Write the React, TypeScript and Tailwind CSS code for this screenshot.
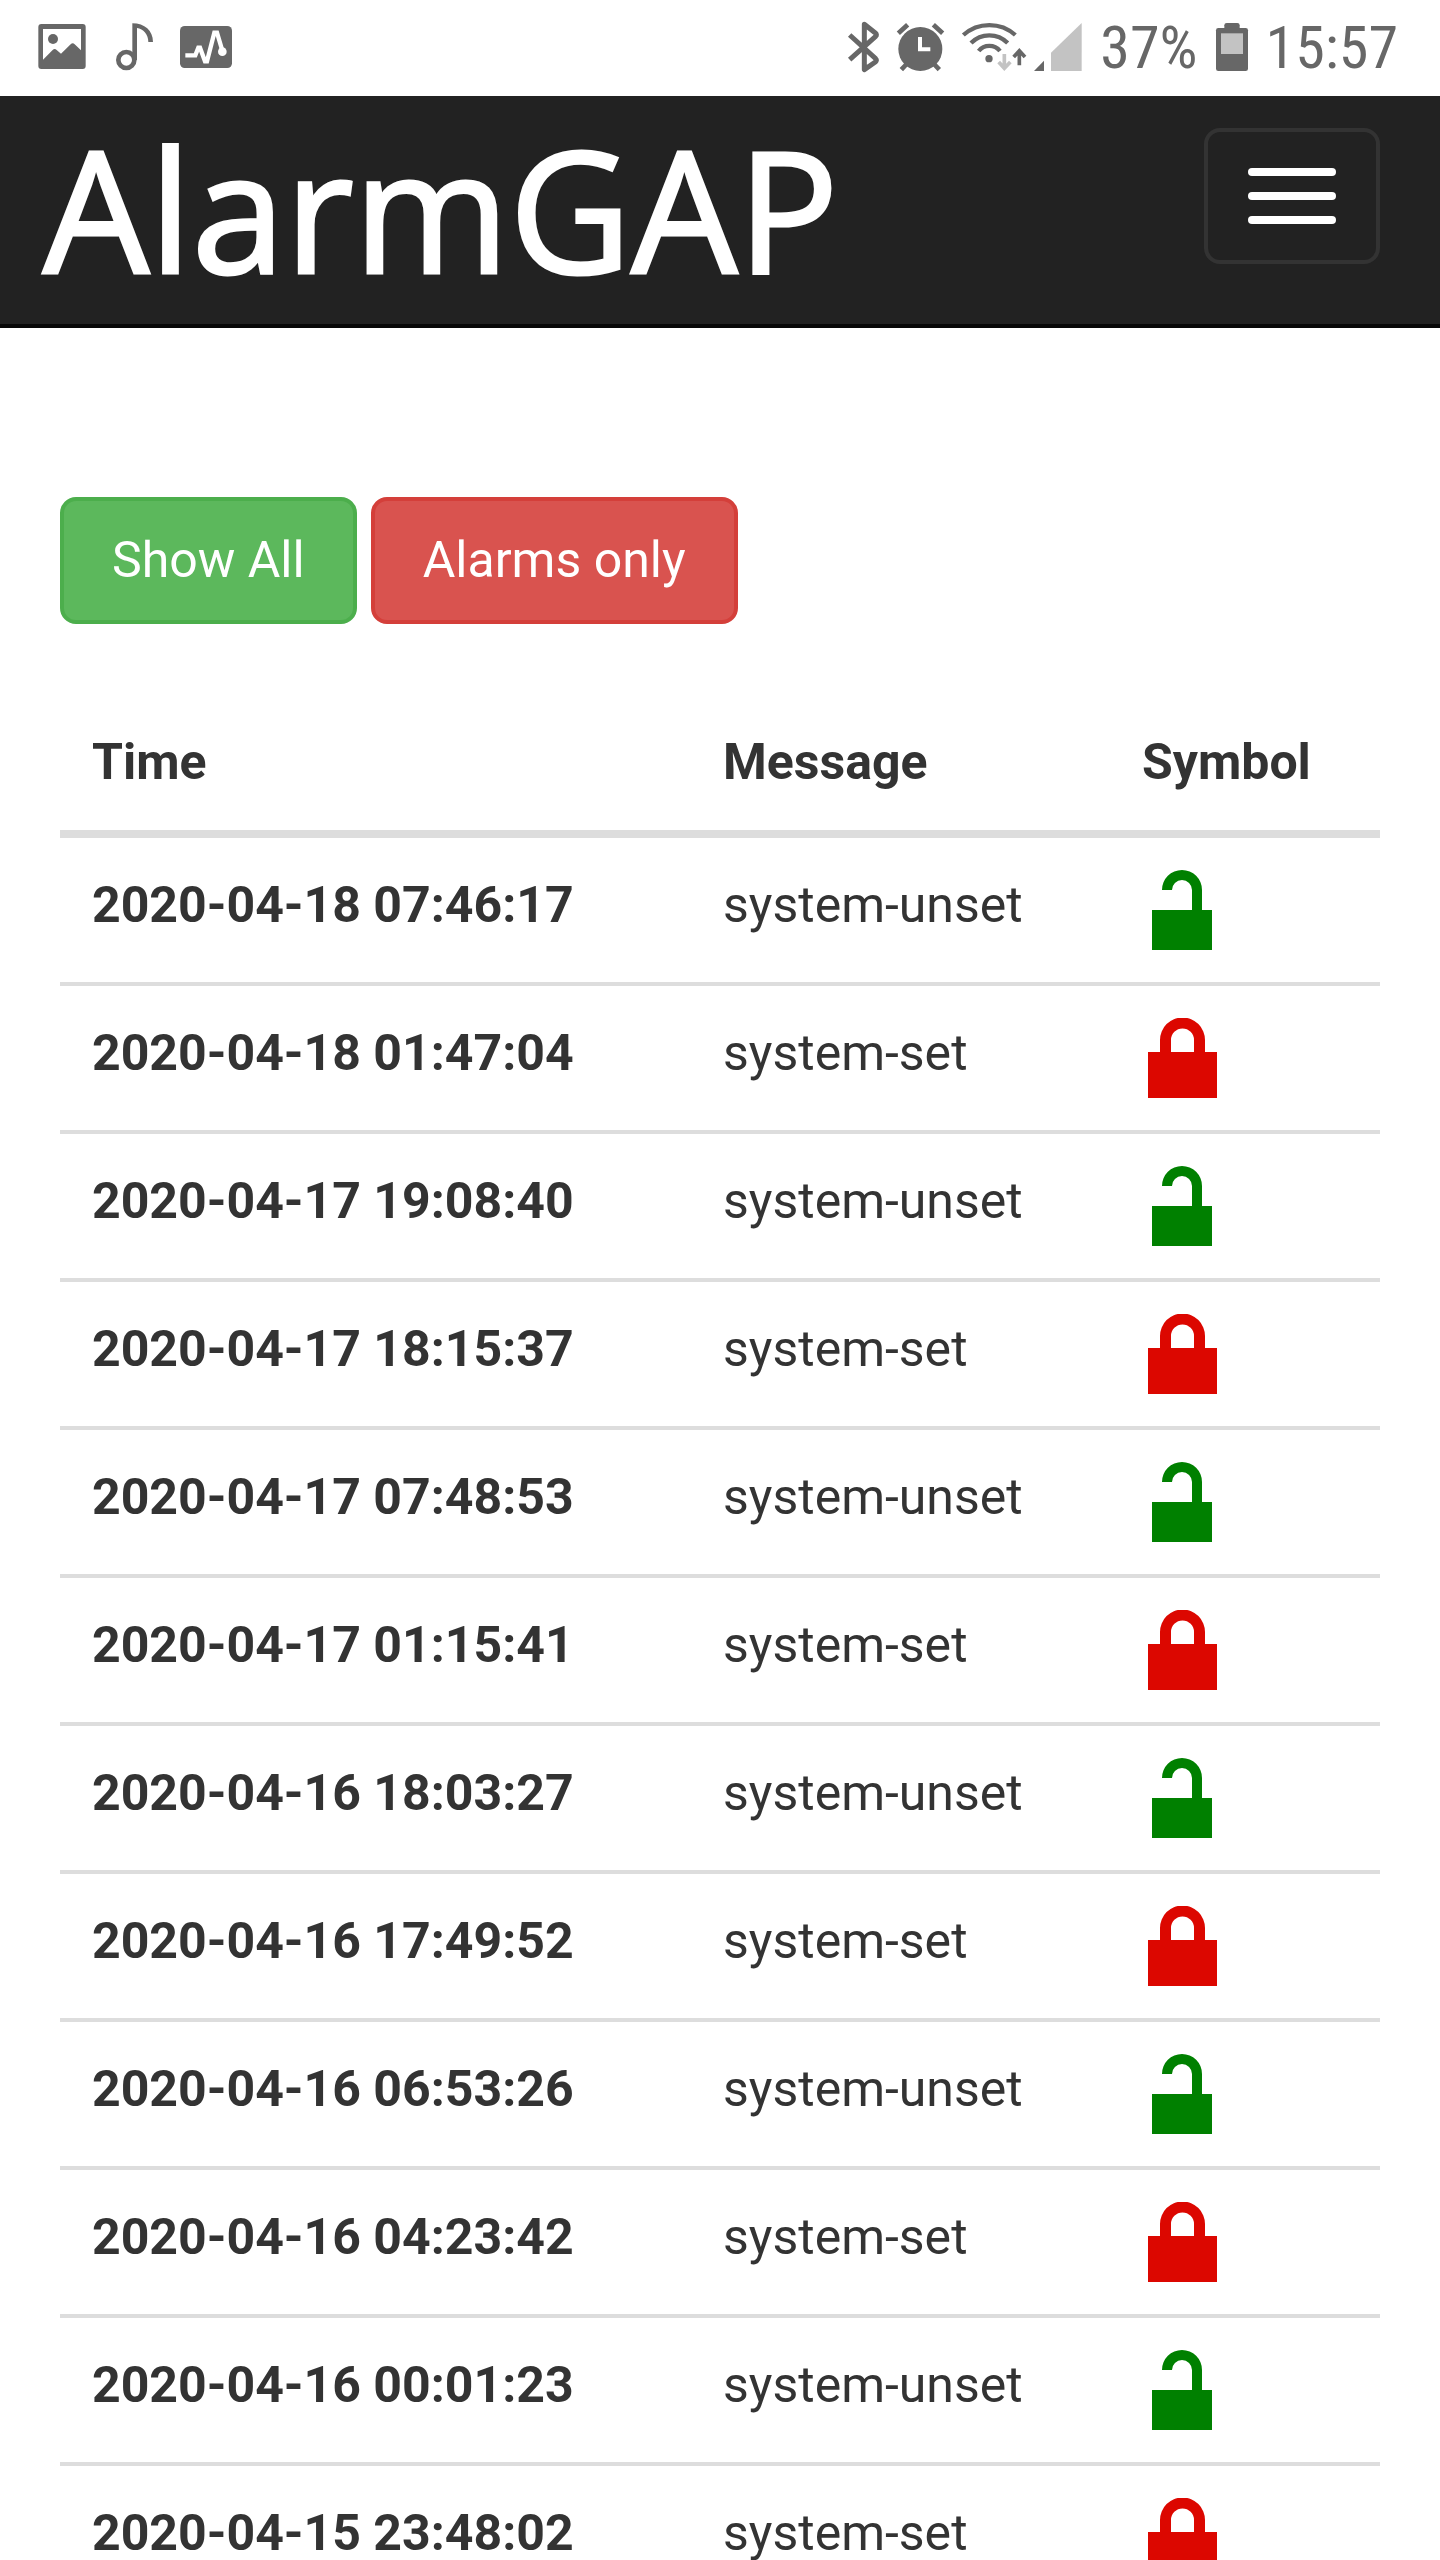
import { useState } from "react";

interface LogEntry {
  time: string;
  message: "system-set" | "system-unset";
}

const entries: LogEntry[] = [
  { time: "2020-04-18 07:46:17", message: "system-unset" },
  { time: "2020-04-18 01:47:04", message: "system-set" },
  { time: "2020-04-17 19:08:40", message: "system-unset" },
  { time: "2020-04-17 18:15:37", message: "system-set" },
  { time: "2020-04-17 07:48:53", message: "system-unset" },
  { time: "2020-04-17 01:15:41", message: "system-set" },
  { time: "2020-04-16 18:03:27", message: "system-unset" },
  { time: "2020-04-16 17:49:52", message: "system-set" },
  { time: "2020-04-16 06:53:26", message: "system-unset" },
  { time: "2020-04-16 04:23:42", message: "system-set" },
  { time: "2020-04-16 00:01:23", message: "system-unset" },
  { time: "2020-04-15 23:48:02", message: "system-set" },
];

function PictureIcon() {
  return (
    <svg viewBox="0 0 144 144" className="h-12 w-12 overflow-visible" aria-hidden="true">
      <path
        fill="currentColor"
        fillRule="evenodd"
        d="M10 0H134Q143 0 143 9V126Q143 135 134 135H10Q1 135 1 126V9Q1 0 10 0ZM15 15V107L44 78Q50 72 56 78L69 89L98 61Q104 55 110 61L129 79V15Z"
      />
      <circle cx="45" cy="45" r="15" fill="currentColor" />
    </svg>
  );
}

function NoteIcon() {
  return (
    <svg viewBox="0 0 114 144" className="h-12 w-[38px] overflow-visible" aria-hidden="true">
      <circle cx="37" cy="108" r="24" fill="none" stroke="currentColor" strokeWidth="14" />
      <path fill="currentColor" d="M55 -2C92 -2 117 20 117 54H103C103 32 88 14 69 12V108H55Z" />
    </svg>
  );
}

function PulseIcon() {
  return (
    <svg viewBox="0 0 156 144" className="h-12 w-[52px]" aria-hidden="true">
      <rect y="6" width="156" height="126" rx="14" fill="currentColor" />
      <path
        d="M16 94H46L55 71H60L75 112H81L103 26H111L127 80"
        fill="none"
        stroke="white"
        strokeWidth="13"
      />
      <circle cx="127" cy="83" r="13" fill="white" />
    </svg>
  );
}

function BluetoothIcon() {
  return (
    <svg viewBox="0 0 93 144" className="h-12 w-[31px] overflow-visible" aria-hidden="true">
      <path
        d="M5 33L83 104Q88 109 82 114L49 137V1L82 27Q88 32 83 37L5 107"
        fill="none"
        stroke="currentColor"
        strokeWidth="15"
        strokeLinejoin="round"
      />
    </svg>
  );
}

function AlarmIcon() {
  return (
    <svg viewBox="0 0 141 144" className="h-12 w-[47px] overflow-visible" aria-hidden="true">
      <circle cx="70" cy="75" r="66" fill="currentColor" />
      <path
        d="M4 28L32 2M109 2L137 28M29 120L13 137M111 120L127 137"
        stroke="currentColor"
        strokeWidth="14"
      />
      <path d="M69 39V76H100" fill="none" stroke="white" strokeWidth="12" />
    </svg>
  );
}

function WifiIcon() {
  return (
    <svg viewBox="0 0 192 144" className="h-12 w-16 overflow-visible" aria-hidden="true">
      <g fill="none" stroke="currentColor" strokeWidth="13">
        <path d="M4 33A117 117 0 0 1 160 33" />
        <path d="M27 57A77 77 0 0 1 137 57" />
        <path d="M50 81A41 41 0 0 1 114 81" />
      </g>
      <circle cx="81" cy="104" r="11" fill="currentColor" />
      <path d="M127 90V132M110 114L127 133L145 114" fill="none" stroke="#c3c3c3" strokeWidth="11" />
      <path d="M172 124V84M155 99L172 80L189 99" fill="none" stroke="currentColor" strokeWidth="11" />
    </svg>
  );
}

function SignalIcon() {
  return (
    <svg viewBox="0 0 144 144" className="h-12 w-12 overflow-visible" aria-hidden="true">
      <path d="M0 141H30V110Z" fill="currentColor" />
      <path d="M51 141V86L143 -3V141Z" fill="#c3c3c3" />
    </svg>
  );
}

function BatteryIcon() {
  return (
    <svg viewBox="0 0 96 144" className="h-12 w-8 overflow-visible" aria-hidden="true">
      <rect x="25" y="-3" width="46" height="24" rx="7" fill="currentColor" />
      <rect y="12" width="96" height="129" rx="7" fill="currentColor" />
      <rect x="15" y="28" width="66" height="62" fill="#c3c3c3" />
    </svg>
  );
}

function LockedIcon() {
  return (
    <svg viewBox="0 0 80 80" className="block h-20 w-20" role="img" aria-label="set">
      <path
        fill="#dc0700"
        d="M6 34H18V22A22 22 0 0 1 63 22V34H75V80H6ZM29 34H52V22A11 11 0 0 0 29 22Z"
        fillRule="evenodd"
      />
    </svg>
  );
}

function UnlockedIcon() {
  return (
    <svg viewBox="0 0 80 80" className="block h-20 w-20" role="img" aria-label="unset">
      <path fill="#008000" d="M10 40H50V20A10 10 0 0 0 30 20H20A20 20 0 0 1 60 20V40H70V80H10Z" />
    </svg>
  );
}

function StatusBar() {
  return (
    <div className="flex h-24 items-center justify-between bg-white pr-[42px] pl-[38px] text-[#676767]">
      <div className="flex items-center gap-7">
        <PictureIcon />
        <NoteIcon />
        <PulseIcon />
      </div>
      <div className="flex items-center gap-[18px] font-['Roboto_Condensed',Roboto,sans-serif] text-[60px] leading-none">
        <BluetoothIcon />
        <AlarmIcon />
        <div className="flex gap-2">
          <WifiIcon />
          <SignalIcon />
        </div>
        <span>37%</span>
        <BatteryIcon />
        <span>15:57</span>
      </div>
    </div>
  );
}

function Navbar() {
  return (
    <nav className="flex h-[232px] items-start justify-between border-b-4 border-[#080808] bg-[#222] pr-[60px] pl-[43px]">
      <a
        href="#"
        className="flex h-56 items-center font-['Open_Sans',sans-serif] text-[168px] leading-none text-white [-webkit-text-stroke:3px_white]"
      >
        AlarmGAP
      </a>
      <button
        type="button"
        aria-label="Toggle navigation"
        className="mt-8 flex h-[136px] w-44 flex-col items-center gap-4 rounded-2xl border-4 border-[#333] pt-9"
      >
        <span className="h-2 w-[88px] rounded-sm bg-white" />
        <span className="h-2 w-[88px] rounded-sm bg-white" />
        <span className="h-2 w-[88px] rounded-sm bg-white" />
      </button>
    </nav>
  );
}

export default function App() {
  const [alarmsOnly, setAlarmsOnly] = useState(false);
  const rows = alarmsOnly ? entries.filter((e) => !e.message.startsWith("system")) : entries;

  return (
    <div className="h-screen overflow-hidden bg-white font-[Roboto,sans-serif] text-[50px] leading-[71px] text-[#333]">
      <StatusBar />
      <Navbar />
      <main className="px-[60px] pt-[169px]">
        <div className="flex gap-3.5 text-white">
          <button
            type="button"
            className="rounded-2xl border-4 border-[#4cae4c] bg-[#5cb85c] px-12 py-6"
            onClick={() => setAlarmsOnly(false)}
          >
            Show All
          </button>
          <button
            type="button"
            className="rounded-2xl border-4 border-[#d43f3a] bg-[#d9534f] px-12 py-6"
            onClick={() => setAlarmsOnly(true)}
          >
            Alarms only
          </button>
        </div>
        <table className="mt-[71px] w-full table-fixed border-separate border-spacing-0 text-left">
          <thead>
            <tr>
              <th className="w-[631px] border-b-8 border-[#ddd] p-8 font-bold">Time</th>
              <th className="w-[419px] border-b-8 border-[#ddd] p-8 font-bold">Message</th>
              <th className="border-b-8 border-[#ddd] p-8 font-bold">Symbol</th>
            </tr>
          </thead>
          <tbody>
            {rows.map((entry) => (
              <tr key={entry.time} className="align-top">
                <th scope="row" className="border-b-4 border-[#ddd] p-8 font-bold whitespace-nowrap">
                  {entry.time}
                </th>
                <td className="border-b-4 border-[#ddd] p-8">{entry.message}</td>
                <td className="border-b-4 border-[#ddd] p-8">
                  {entry.message === "system-set" ? <LockedIcon /> : <UnlockedIcon />}
                </td>
              </tr>
            ))}
          </tbody>
        </table>
      </main>
    </div>
  );
}
